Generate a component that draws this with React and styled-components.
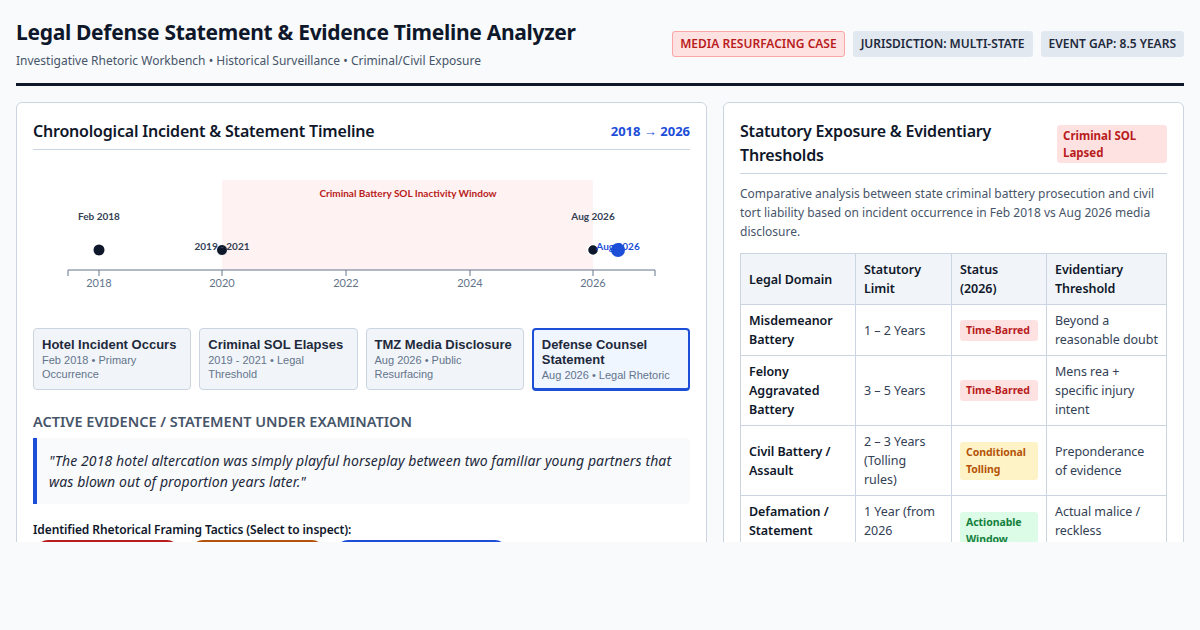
import React from 'react'
import styled, { createGlobalStyle } from 'styled-components'

const GlobalStyle = createGlobalStyle`
  * { box-sizing: border-box; }
  body {
    margin: 0;
    background: #f8fafc;
    font-family: 'Noto Sans', 'Open Sans', sans-serif;
    color: #0f172a;
  }
`

const Page = styled.div`
  padding: 16px;
`

const Header = styled.header`
  display: flex;
  justify-content: space-between;
  align-items: flex-start;
  padding: 1px 0 14px;
  border-bottom: 3px solid #0f172a;
`

const Title = styled.h1`
  margin: 0;
  font-size: 21px;
  font-weight: 700;
  letter-spacing: -0.3px;
  line-height: 30px;
`

const Subtitle = styled.div`
  margin-top: 5px;
  font-size: 12px;
  color: #475569;
`

const Badges = styled.div`
  display: flex;
  gap: 8px;
  margin-top: 14px;
`

const Badge = styled.span`
  font-size: 12px;
  font-weight: 600;
  padding: 5px 7px;
  border-radius: 3px;
  line-height: 14px;
  background: ${p => (p.$alert ? '#fee2e2' : '#e2e8f0')};
  color: ${p => (p.$alert ? '#b91c1c' : '#1e293b')};
  border: 1px solid ${p => (p.$alert ? '#fca5a5' : '#e2e8f0')};
`

const Workspace = styled.main`
  display: grid;
  grid-template-columns: 691px 1fr;
  gap: 16px;
  margin-top: 16px;
  height: 440px;
  overflow: hidden;
  align-items: start;
`

const Panel = styled.section`
  background: #fff;
  border: 1px solid #cbd5e1;
  border-radius: 6px;
  padding: 16px;
`

const PanelHead = styled.div`
  display: flex;
  justify-content: space-between;
  align-items: ${p => (p.$top ? 'flex-start' : 'center')};
  gap: 16px;
  padding: 0 0 6px;
  border-bottom: 1px solid #cbd5e1;
`

const PanelTitle = styled.h2`
  margin: 0;
  font-size: 16px;
  font-weight: 600;
  letter-spacing: -0.2px;
  line-height: 24px;
  color: #0f172a;
`

const RangeTag = styled.span`
  font-size: 13px;
  font-weight: 700;
  color: #1d4ed8;
`

const Chart = styled.svg`
  display: block;
  margin-top: 10px;
  font-family: Lato, 'Noto Sans', sans-serif;
`

const EventRow = styled.div`
  display: grid;
  grid-template-columns: repeat(4, 1fr);
  gap: 8px;
  margin-top: 8px;
`

const EventCard = styled.div`
  font-family: 'Liberation Sans', Arial, sans-serif;
  background: ${p => (p.$active ? '#eff6ff' : '#f1f5f9')};
  border: ${p => (p.$active ? '2px solid #1d4ed8' : '1px solid #cbd5e1')};
  border-bottom-width: ${p => (p.$active ? '3px' : '1px')};
  border-radius: 4px;
  padding: ${p => (p.$active ? '7px 8px 6px' : '8px 8px 8px')};
  height: ${p => (p.$active ? '63px' : '62px')};
`

const EventName = styled.div`
  font-size: 13px;
  font-weight: 700;
  line-height: 15px;
  color: #1e293b;
`

const EventMeta = styled.div`
  font-size: 11px;
  line-height: 14px;
  color: #64748b;
  margin-top: 1px;
`

const SectionLabel = styled.h3`
  margin: 20px 0 7px;
  font-size: 14.5px;
  font-weight: 600;
  text-transform: uppercase;
  color: #475569;
`

const Quote = styled.blockquote`
  margin: 0;
  background: #f8fafc;
  border-left: 4px solid #1d4ed8;
  border-radius: 0 4px 4px 0;
  padding: 12px;
  font-style: italic;
  font-size: 14px;
  letter-spacing: 0.1px;
  line-height: 21px;
  color: #1e293b;
`

const TacticsLabel = styled.div`
  margin-top: 18px;
  font-size: 12px;
  letter-spacing: -0.1px;
  line-height: 16px;
  font-weight: 600;
  color: #0f172a;
`

const Tactics = styled.div`
  display: flex;
  gap: 12px;
  margin-top: 2px;
  padding-left: 3px;
`

const Tactic = styled.button`
  border: none;
  border-radius: 12px;
  padding: 8px 14px;
  font-family: inherit;
  font-size: 12px;
  font-weight: 600;
  color: #fff;
  background: ${p => p.$color};
  width: ${p => p.$w}px;
`

const Note = styled.p`
  margin: 10px 0 0;
  font-size: 12px;
  line-height: 19px;
  color: #475569;
`

const Pill = styled.span`
  display: ${p => (p.$inline ? 'inline-block' : 'block')};
  font-size: 10.5px;
  font-weight: 700;
  line-height: 17px;
  padding: 2px 6px;
  border-radius: 3px;
  background: ${p => p.$bg};
  color: ${p => p.$fg};
`

const HeadPill = styled(Pill)`
  flex-shrink: 0;
  width: 110px;
  font-size: 11.5px;
  margin-top: 6px;
`

const Table = styled.table`
  width: 100%;
  margin-top: 12px;
  border-collapse: collapse;
  font-size: 12.5px;
  letter-spacing: -0.05px;
  line-height: 19px;
`

const Th = styled.th`
  text-align: left;
  font-weight: 600;
  background: #f1f5f9;
  color: #0f172a;
  border: 1px solid #cbd5e1;
  padding: 6px 8px;
  white-space: pre-line;
  width: ${p => p.$w}px;
`

const Td = styled.td`
  border: 1px solid #cbd5e1;
  padding: 6px 8px;
  vertical-align: middle;
  white-space: pre-line;
  color: ${p => (p.$strong ? '#0f172a' : '#334155')};
  font-weight: ${p => (p.$strong ? 600 : 400)};
`

const events = [
  { name: 'Hotel Incident Occurs', meta: 'Feb 2018 • Primary Occurrence' },
  { name: 'Criminal SOL Elapses', meta: '2019 - 2021 • Legal Threshold' },
  { name: 'TMZ Media Disclosure', meta: 'Aug 2026 • Public Resurfacing' },
  { name: 'Defense Counsel Statement', meta: 'Aug 2026 • Legal Rhetoric', active: true }
]

const statuses = {
  barred: { bg: '#fee2e2', fg: '#b91c1c' },
  tolling: { bg: '#fef3c7', fg: '#b45309' },
  open: { bg: '#dcfce7', fg: '#15803d' }
}

const rows = [
  { domain: 'Misdemeanor Battery', limit: '1 – 2 Years', status: 'Time-Barred', kind: 'barred', threshold: 'Beyond a\nreasonable doubt' },
  { domain: 'Felony Aggravated Battery', limit: '3 – 5 Years', status: 'Time-Barred', kind: 'barred', threshold: 'Mens rea + specific injury intent' },
  { domain: 'Civil Battery / Assault', limit: '2 – 3 Years (Tolling\nrules)', status: 'Conditional Tolling', kind: 'tolling', threshold: 'Preponderance of evidence' },
  { domain: 'Defamation / Statement Liability', limit: '1 Year (from 2026 disclosure)', status: 'Actionable Window', kind: 'open', threshold: 'Actual malice / reckless disregard' }
]

const ticks = [
  { x: 66, label: '2018' },
  { x: 189, label: '2020' },
  { x: 313, label: '2022' },
  { x: 437, label: '2024' },
  { x: 560, label: '2026' }
]

function Timeline () {
  return (
    <Chart width='657' height='160' viewBox='0 0 657 160'>
      <rect x='189' y='20' width='371' height='90' fill='#fef2f2' rx='2' />
      <text x='375' y='37' textAnchor='middle' fontSize='10' fontWeight='700' fill='#b91c1c'>
        Criminal Battery SOL Inactivity Window
      </text>
      <path d='M35 116V110H622V116' fill='none' stroke='#64748b' strokeWidth='1' />
      {ticks.map(t => (
        <g key={t.label}>
          <line x1={t.x} x2={t.x} y1='110' y2='116' stroke='#64748b' />
          <text x={t.x} y='127' textAnchor='middle' fontSize='11' fill='#64748b'>{t.label}</text>
        </g>
      ))}
      <text x='66' y='60' textAnchor='middle' fontSize='10' fontWeight='700' fill='#334155'>Feb 2018</text>
      <circle cx='66' cy='90' r='5.5' fill='#0f172a' />
      <circle cx='189' cy='90' r='5.5' fill='#0f172a' stroke='#fff' strokeWidth='1' />
      <text x='189' y='90' textAnchor='middle' fontSize='10' fontWeight='700' fill='#334155'>2019 - 2021</text>
      <text x='560' y='60' textAnchor='middle' fontSize='10' fontWeight='700' fill='#334155'>Aug 2026</text>
      <circle cx='560' cy='90' r='5.5' fill='#0f172a' stroke='#fff' strokeWidth='1.5' />
      <circle cx='585' cy='90' r='7' fill='#1d4ed8' />
      <text x='585' y='90' textAnchor='middle' fontSize='10' fontWeight='700' fill='#1d4ed8'>Aug 2026</text>
    </Chart>
  )
}

export default function App () {
  return (
    <Page>
      <GlobalStyle />
      <Header>
        <div>
          <Title>Legal Defense Statement &amp; Evidence Timeline Analyzer</Title>
          <Subtitle>Investigative Rhetoric Workbench • Historical Surveillance • Criminal/Civil Exposure</Subtitle>
        </div>
        <Badges>
          <Badge $alert>MEDIA RESURFACING CASE</Badge>
          <Badge>JURISDICTION: MULTI-STATE</Badge>
          <Badge>EVENT GAP: 8.5 YEARS</Badge>
        </Badges>
      </Header>
      <Workspace>
        <Panel>
          <PanelHead>
            <PanelTitle>Chronological Incident &amp; Statement Timeline</PanelTitle>
            <RangeTag>2018 → 2026</RangeTag>
          </PanelHead>
          <Timeline />
          <EventRow>
            {events.map(e => (
              <EventCard key={e.name} $active={e.active}>
                <EventName>{e.name}</EventName>
                <EventMeta>{e.meta}</EventMeta>
              </EventCard>
            ))}
          </EventRow>
          <SectionLabel>Active Evidence / Statement Under Examination</SectionLabel>
          <Quote>
            "The 2018 hotel altercation was simply playful horseplay between two familiar young partners that was blown out of proportion years later."
          </Quote>
          <TacticsLabel>Identified Rhetorical Framing Tactics (Select to inspect):</TacticsLabel>
          <Tactics>
            <Tactic $color='#b91c1c' $w={143}>Minimization</Tactic>
            <Tactic $color='#b45309' $w={133}>Reframing</Tactic>
            <Tactic $color='#1d4ed8' $w={171}>Temporal Distancing</Tactic>
          </Tactics>
        </Panel>
        <Panel>
          <PanelHead $top>
            <PanelTitle>Statutory Exposure &amp; Evidentiary Thresholds</PanelTitle>
            <HeadPill $bg='#fee2e2' $fg='#b91c1c'>Criminal SOL Lapsed</HeadPill>
          </PanelHead>
          <Note>
            Comparative analysis between state criminal battery prosecution and civil tort liability based on incident occurrence in Feb 2018 vs Aug 2026 media disclosure.
          </Note>
          <Table>
            <thead>
              <tr>
                <Th $w={115}>Legal Domain</Th>
                <Th $w={96}>Statutory Limit</Th>
                <Th $w={95}>{'Status\n(2026)'}</Th>
                <Th>Evidentiary Threshold</Th>
              </tr>
            </thead>
            <tbody>
              {rows.map(r => (
                <tr key={r.domain}>
                  <Td $strong>{r.domain}</Td>
                  <Td>{r.limit}</Td>
                  <Td>
                    <Pill $bg={statuses[r.kind].bg} $fg={statuses[r.kind].fg}>{r.status}</Pill>
                  </Td>
                  <Td>{r.threshold}</Td>
                </tr>
              ))}
            </tbody>
          </Table>
        </Panel>
      </Workspace>
    </Page>
  )
}
